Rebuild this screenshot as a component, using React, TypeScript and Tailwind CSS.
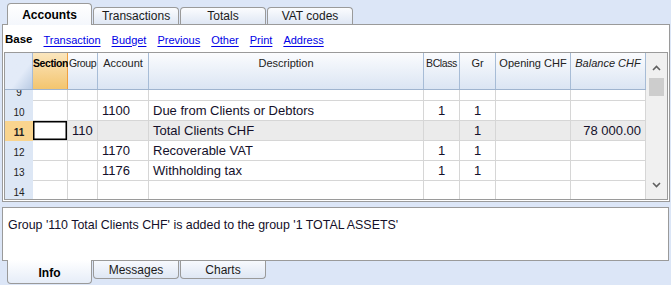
import React from "react";

type Row = {
  n: string;
  section?: string;
  group?: string;
  account?: string;
  desc?: string;
  bclass?: string;
  gr?: string;
  opening?: string;
  balance?: string;
  selected?: boolean;
};

const rows: Row[] = [
  { n: "9" },
  { n: "10", account: "1100", desc: "Due from Clients or Debtors", bclass: "1", gr: "1" },
  { n: "11", group: "110", desc: "Total Clients CHF", gr: "1", balance: "78 000.00", selected: true },
  { n: "12", account: "1170", desc: "Recoverable VAT", bclass: "1", gr: "1" },
  { n: "13", account: "1176", desc: "Withholding tax", bclass: "1", gr: "1" },
  { n: "14" },
];

function Tab({ label, active, bottom }: { label: string; active?: boolean; bottom?: boolean }) {
  if (bottom) {
    return (
      <div
        className={
          active
            ? "relative z-10 -mt-px flex h-[24px] w-[85px] items-center justify-center rounded-b-[4px] border border-t-0 border-[#9a9a9a] bg-gradient-to-t from-[#e6edf8] to-white pt-[2px] text-[12px] font-bold text-black"
            : "flex h-[18px] w-[86px] items-center justify-center rounded-b-[4px] border border-t-0 border-[#9a9a9a] bg-gradient-to-t from-[#dfe7f4] to-[#f7f9fd] text-[12px] text-[#1a1a1a]"
        }
      >
        {label}
      </div>
    );
  }
  return (
    <div
      className={
        active
          ? "relative z-10 -mb-px flex h-[22px] w-[85px] items-center justify-center rounded-t-[4px] border border-b-0 border-[#9a9a9a] bg-gradient-to-b from-white to-[#f4f7fc] text-[12px] font-bold text-black"
          : "flex h-[17px] w-[86px] items-center justify-center rounded-t-[4px] border border-b-0 border-[#9a9a9a] bg-gradient-to-b from-[#fbfcfe] to-[#dfe7f4] text-[12px] text-[#1a1a1a]"
      }
    >
      {label}
    </div>
  );
}

function HeadCell({ w, children, italic, section, tight }: { w: string; children?: React.ReactNode; italic?: boolean; section?: boolean; tight?: boolean }) {
  return (
    <div
      className={
        w +
        " h-full shrink-0 whitespace-nowrap border-r pt-[4px] text-center leading-[13px] " +
        (tight ? "text-[10.5px] tracking-[-0.4px] " : "text-[11px] ") +
        (section
          ? "border-[#f0a040] bg-gradient-to-b from-[#fbe6bd] to-[#f3c56e] font-bold text-black"
          : "border-[#a7bcd6] bg-gradient-to-b from-[#fbfcfe] to-[#dbe5f3] text-[#222]") +
        (italic ? " italic" : "")
      }
    >
      {children}
    </div>
  );
}

function Cell({ w, children, align }: { w: string; children?: React.ReactNode; align?: "l" | "c" | "r" }) {
  const a = align === "c" ? "justify-center" : align === "r" ? "justify-end pr-[4px]" : "pl-[4px]";
  return (
    <div className={w + " flex h-full shrink-0 items-center border-r border-[#d6d6d6] text-[13px] text-[#14102a] " + a}>
      {children}
    </div>
  );
}

export default function App() {
  return (
    <div
      className="h-[285px] w-[671px] overflow-hidden bg-[#dce6f7]"
      style={{ fontFamily: "'Liberation Sans', Arial, sans-serif" }}
    >
      {/* top tabs */}
      <div className="flex h-[24px] items-end gap-px pl-[7px]">
        <Tab label="Accounts" active />
        <Tab label="Transactions" />
        <Tab label="Totals" />
        <Tab label="VAT codes" />
      </div>

      {/* main panel */}
      <div className="ml-[2px] flex h-[178px] w-[668px] flex-col border border-[#9a9a9a] bg-white px-px">
        <div className="flex h-[27px] items-center gap-[11px] pl-px pt-[3px] text-[11px]">
          <span className="text-[11.5px] font-bold text-black">Base</span>
          {["Transaction", "Budget", "Previous", "Other", "Print", "Address"].map((l) => (
            <span key={l} className="text-[#0000e6] underline underline-offset-2">
              {l}
            </span>
          ))}
        </div>

        <div className="flex h-[148px] w-[664px] border border-[#9a9a9a]">
          <div className="flex w-[641px] flex-col">
            {/* header */}
            <div className="flex h-[37px] shrink-0 border-b border-[#9fb4cf]">
              <div className="h-full w-[28px] shrink-0 border-r border-[#a7bcd6] bg-gradient-to-br from-[#e3ebf8] from-60% to-[#b9cbe4]" />
              <HeadCell w="w-[35px]" section tight>
                Section
              </HeadCell>
              <HeadCell w="w-[30px]" tight>
                Group
              </HeadCell>
              <HeadCell w="w-[51px]">Account</HeadCell>
              <HeadCell w="w-[275px]">Description</HeadCell>
              <HeadCell w="w-[36px]" tight>
                BClass
              </HeadCell>
              <HeadCell w="w-[36px]">Gr</HeadCell>
              <HeadCell w="w-[75px]">Opening CHF</HeadCell>
              <HeadCell w="w-[75px]" italic>
                Balance CHF
              </HeadCell>
            </div>
            {/* rows */}
            <div className="flex-1 overflow-hidden">
              <div className="-mt-[9px]">
                {rows.map((r) => (
                  <div
                    key={r.n}
                    className={"flex h-[20px] border-b border-[#d6d6d6] " + (r.selected ? "bg-[#ebebeb]" : "bg-white")}
                  >
                    <div
                      className={
                        "flex h-[20px] w-[28px] shrink-0 items-center justify-center pt-[3px] text-[10px] text-[#222] " +
                        (r.selected ? "bg-[#f9d48e] font-bold" : "bg-[#dde7f5]")
                      }
                    >
                      {r.n}
                    </div>
                    <div
                      className={
                        "h-full w-[35px] shrink-0 border-r border-[#d6d6d6] " +
                        (r.selected ? "bg-white shadow-[inset_0_0_0_1.5px_#000]" : "")
                      }
                    >
                      {r.section}
                    </div>
                    <Cell w="w-[30px]">{r.group}</Cell>
                    <Cell w="w-[51px]">{r.account}</Cell>
                    <Cell w="w-[275px]">{r.desc}</Cell>
                    <Cell w="w-[36px]" align="c">
                      {r.bclass}
                    </Cell>
                    <Cell w="w-[36px]" align="c">
                      {r.gr}
                    </Cell>
                    <Cell w="w-[75px]" align="r">
                      {r.opening}
                    </Cell>
                    <Cell w="w-[75px]" align="r">
                      {r.balance}
                    </Cell>
                  </div>
                ))}
              </div>
            </div>
          </div>
          {/* scrollbar */}
          <div className="flex w-[21px] flex-col items-center bg-[#f0f0f0]">
            <div className="flex h-[20px] w-full items-end justify-center pb-[2px]">
              <svg width="9" height="6" viewBox="0 0 9 6">
                <path d="M1 5 L4.5 1.5 L8 5" fill="none" stroke="#606060" strokeWidth="1.6" />
              </svg>
            </div>
            <div className="mt-[5px] h-[18px] w-[15px] bg-[#cdcdcd]" />
            <div className="flex-1" />
            <div className="flex h-[20px] w-full items-start justify-center pt-[3px]">
              <svg width="9" height="6" viewBox="0 0 9 6">
                <path d="M1 1 L4.5 4.5 L8 1" fill="none" stroke="#606060" strokeWidth="1.6" />
              </svg>
            </div>
          </div>
        </div>
      </div>

      {/* info panel */}
      <div className="ml-[2px] mt-[5px] h-[54px] w-[667px] border border-[#9a9a9a] bg-white px-[5px] pt-[8px] text-[12.4px] text-[#14102a]">
        Group '110 Total Clients CHF' is added to the group '1 TOTAL ASSETS'
      </div>

      {/* bottom tabs */}
      <div className="flex items-start gap-px pl-[7px]">
        <Tab label="Info" active bottom />
        <Tab label="Messages" bottom />
        <Tab label="Charts" bottom />
      </div>
    </div>
  );
}
